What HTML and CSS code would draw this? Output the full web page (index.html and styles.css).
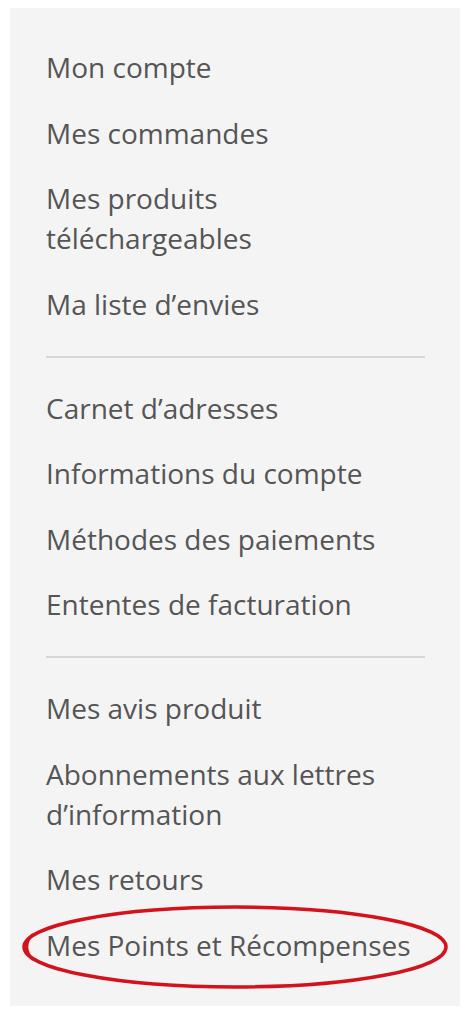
FILE: index.html
```html
<!DOCTYPE html>
<html lang="fr">
<head>
    <meta charset="UTF-8">
    <meta name="viewport" content="width=device-width, initial-scale=1.0">
    <title>Mon compte</title>
    <link rel="stylesheet" href="styles.css">
</head>
<body>
    <nav class="account-nav">
        <ul class="nav-list">
            <li class="nav-item"><a href="#">Mon compte</a></li>
            <li class="nav-item"><a href="#">Mes commandes</a></li>
            <li class="nav-item"><a href="#">Mes produits téléchargeables</a></li>
            <li class="nav-item"><a href="#">Ma liste d’envies</a></li>
            <li class="nav-divider"></li>
            <li class="nav-item"><a href="#">Carnet d’adresses</a></li>
            <li class="nav-item"><a href="#">Informations du compte</a></li>
            <li class="nav-item"><a href="#">Méthodes des paiements</a></li>
            <li class="nav-item"><a href="#">Ententes de facturation</a></li>
            <li class="nav-divider"></li>
            <li class="nav-item"><a href="#">Mes avis produit</a></li>
            <li class="nav-item"><a href="#">Abonnements aux lettres d’information</a></li>
            <li class="nav-item"><a href="#">Mes retours</a></li>
            <li class="nav-item highlighted">
                <a href="#">Mes Points et Récompenses</a>
                <!-- cercle rouge dessiné à la main -->
                <svg class="circle-mark" width="430" height="88" viewBox="0 0 430 88">
                    <ellipse cx="216" cy="43" rx="211" ry="40" fill="none" stroke="#d3121b" stroke-width="3.5"/>
                    <path d="M 14 30 Q 2 43 14 56" fill="none" stroke="#d3121b" stroke-width="2.5"/>
                </svg>
            </li>
        </ul>
    </nav>
</body>
</html>
```

FILE: styles.css
```css
body {
    margin: 0;
    font-family: "Open Sans", Arial, sans-serif;
    background-color: #fff;
}
.account-nav {
    margin: 8px 10px;
    width: 450px;
    height: 998px;
    box-sizing: border-box;
    background-color: #f4f4f4;
    padding: 26.5px 35px 28px 36px;
}
.nav-list {
    list-style: none;
    margin: 0;
    padding: 0;
}
.nav-item {
    position: relative;
    padding: 12.75px 0;
    font-size: 28px;
    line-height: 40px;
}
.nav-item a {
    color: #555;
    text-decoration: none;
}
.nav-divider {
    height: 2px;
    background-color: #d6d6d6;
    margin: 19px 0 17.5px;
}
.circle-mark {
    position: absolute;
    left: -27px;
    top: -8px;
    pointer-events: none;
}
```
